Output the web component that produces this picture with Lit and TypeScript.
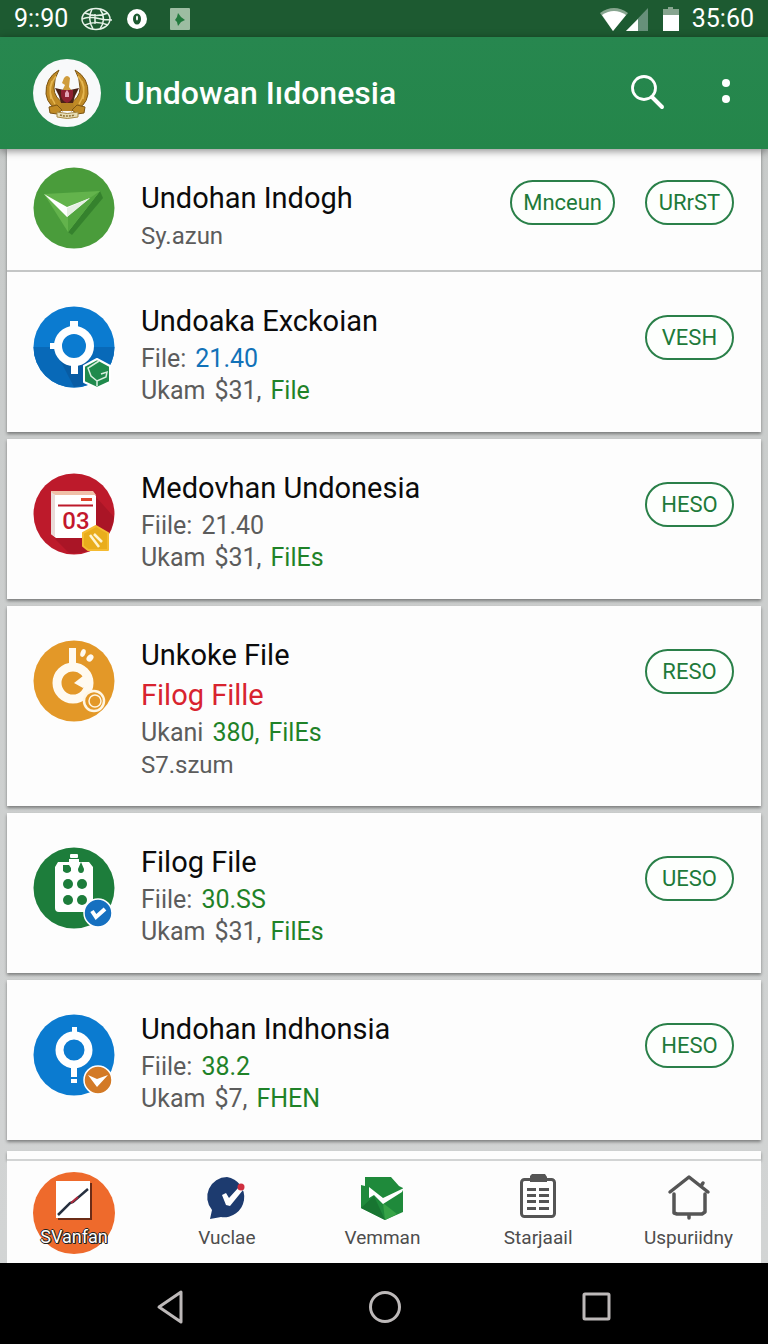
import { LitElement, html, css, svg } from 'lit';
import { customElement, property } from 'lit/decorators.js';

type Tone = 'grey' | 'blue' | 'green' | 'red';

interface Part {
  text: string;
  tone: Tone;
}

interface Row {
  icon: string;
  title: string;
  note?: string;
  lines: Part[][];
  foot?: string;
  actions: string[];
}

const grey = (text: string): Part => ({ text, tone: 'grey' });
const green = (text: string): Part => ({ text, tone: 'green' });

const ROWS: Row[] = [
  { icon: 'plane', title: 'Undohan Indogh', lines: [], foot: 'Sy.azun', actions: ['Mnceun', 'URrST'] },
  {
    icon: 'target',
    title: 'Undoaka Exckoian',
    lines: [
      [grey('File:'), { text: '21.40', tone: 'blue' }],
      [grey('Ukam'), grey('$31,'), green('File')],
    ],
    actions: ['VESH'],
  },
  {
    icon: 'calendar',
    title: 'Medovhan Undonesia',
    lines: [
      [grey('Fiile:'), grey('21.40')],
      [grey('Ukam'), grey('$31,'), green('FilEs')],
    ],
    actions: ['HESO'],
  },
  {
    icon: 'coin',
    title: 'Unkoke File',
    note: 'Filog Fille',
    lines: [[grey('Ukani'), green('380,'), green('FilEs')]],
    foot: 'S7.szum',
    actions: ['RESO'],
  },
  {
    icon: 'building',
    title: 'Filog File',
    lines: [
      [grey('Fiile:'), green('30.SS')],
      [grey('Ukam'), grey('$31,'), green('FilEs')],
    ],
    actions: ['UESO'],
  },
  {
    icon: 'pin',
    title: 'Undohan Indhonsia',
    lines: [
      [grey('Fiile:'), green('38.2')],
      [grey('Ukam'), grey('$7,'), green('FHEN')],
    ],
    actions: ['HESO'],
  },
];

const ROW_ICONS: Record<string, unknown> = {
  plane: svg`
    <circle cx="41" cy="41" r="40.5" fill="#4a9c3b"/>
    <path d="M35 65 L67 24 L70 31 L39 68 Z" fill="#2f7a2a" opacity=".75"/>
    <path d="M11 27 L67 24 L35 65 Z" fill="#63b34c"/>
    <path d="M35 46 L67 24 L35 65 Z" fill="#52a53f"/>
    <path d="M11 27 L34 40 L57 31 L34 50 Z" fill="#fff"/>
    <path d="M34 41 L57 31 L34 50 Z" fill="#e6efe3"/>`,
  target: svg`
    <circle cx="41" cy="41" r="40.5" fill="#0b7bd0"/>
    <path d="M.5 41 a40.500 40.500 0 0 0 81 0 Z" fill="#0869b8"/>
    <path d="M55 55 L70 62 L60 77 L41 81 L26 52 Z" fill="#07508f" opacity=".5"/>
    <circle cx="41" cy="40" r="16" fill="#0b7bd0" stroke="#fff" stroke-width="8"/>
    <path d="M37 15 h8 v8 h-8z M38 58 h7 v10 h-7z M17 37 h6 v6 h-6z" fill="#fff"/>
    <path d="M64 53 L77 60 V76 L64 82 L51 76 V60 Z" fill="#1f8a4c" stroke="#fff" stroke-width="2" stroke-linejoin="round"/>
    <path d="M66 55 L55 62 L58 70 L64 75 L73 71 L74 66 L68 68 M64 75 v5" fill="none" stroke="#d8efdf" stroke-width="1.500"/>`,
  calendar: svg`
    <circle cx="41" cy="41" r="40.5" fill="#bd1a2b"/>
    <path d="M63 24 L81 44 A40 40 0 0 1 36 80 L22 66 Z" fill="#9d1223" opacity=".6"/>
    <path d="M18 19 H60 L63 23 V65 H23 L18 61 Z" fill="#fff"/>
    <path d="M18 18 H60 L63 22 H22 L18 20 Z" fill="#f0c0a8"/>
    <path d="M18 19 L22 22 V64 L18 61 Z" fill="#eadbd8"/>
    <path d="M48 26.500 H59" stroke="#e0452c" stroke-width="3"/>
    <path d="M25 32.500 H60" stroke="#bd1a2b" stroke-width="2"/>
    <text x="43" y="56" text-anchor="middle" font-family="Roboto, sans-serif" font-weight="500" font-size="24" fill="#c3172c">03</text>
    <path d="M63 53 L75 60 V77 H55 L50 73 V60 Z" fill="#e9ad1c" stroke="#f5bb31" stroke-width="2" stroke-linejoin="round"/>
    <path d="M57 62 l9 12 M61 61 l8 8" stroke="#fff4cf" stroke-width="2.500"/>`,
  coin: svg`
    <circle cx="41" cy="41" r="40.5" fill="#e39828"/>
    <path d="M36 8 h7 v16 h-7z" fill="#fffaf0"/>
    <circle cx="40" cy="43" r="16" fill="none" stroke="#fffaf0" stroke-width="9"/>
    <path d="M50 36 L41 43 L50 48 L57 43 Z" fill="#fffaf0"/>
    <ellipse cx="50" cy="13" rx="2.500" ry="4" fill="#fffaf0" transform="rotate(20 50 13)"/>
    <ellipse cx="57" cy="18" rx="3" ry="4" fill="#fffaf0" transform="rotate(40 57 18)"/>
    <circle cx="61" cy="61" r="10" fill="#e39828" stroke="#fff6e3" stroke-width="2.500"/>
    <circle cx="62" cy="61" r="6" fill="none" stroke="#fff6e3" stroke-width="1.500"/>`,
  building: svg`
    <circle cx="41" cy="41" r="40.5" fill="#1d7d3b"/>
    <path d="M25 15 H36 V12 H46 V15 H56 L60 20 V62 Q60 65 57 65 H26 Q22 65 22 61 V20 Z" fill="#fff"/>
    <rect x="37" y="7" width="8" height="4" rx="1" fill="#fff"/>
    <path d="M30 18 h6 l2 3 v3 q-4 4-8 0z M48 15 l3 7 q0 4-3 4 t-3-4z" fill="#1d7d3b"/>
    <circle cx="35" cy="37" r="5" fill="#1d7d3b"/>
    <circle cx="49" cy="37" r="5" fill="#1d7d3b"/>
    <circle cx="35" cy="53" r="5" fill="#1d7d3b"/>
    <circle cx="49" cy="53" r="5" fill="#1d7d3b"/>
    <circle cx="65" cy="66" r="14" fill="#1670c0" stroke="#fff" stroke-width="1.500"/>
    <path d="M59 64 l4 6 l9 -8" fill="none" stroke="#fff" stroke-width="4"/>`,
  pin: svg`
    <circle cx="41" cy="41" r="40.5" fill="#0b7bd0"/>
    <circle cx="41" cy="36" r="14.500" fill="none" stroke="#fff" stroke-width="8"/>
    <path d="M39 13 h5 v7 h-5z M38 53 h6 v10 h-6z M38 65 h6 v4 h-6z" fill="#fff"/>
    <circle cx="65" cy="66" r="14" fill="#d37a26" stroke="#fff" stroke-width="1.500"/>
    <path d="M55 61 L64 65 L75 61 L64 73 Z" fill="#fff"/>`,
};

const TAB_ICONS: Record<string, unknown> = {
  chat: svg`
    <path d="M24 3 A20 20 0 1 1 18 43 L7 45 L9 36 A20 20 0 0 1 24 3 Z" fill="#1d3b6f"/>
    <path d="M19 21 l4 -2 l3 5 l10 -11 l4 3 l-13 16 l-4 -1 z" fill="#fff"/>
    <circle cx="38" cy="13" r="3.500" fill="#cf2f3f"/>`,
  box: svg`
    <path d="M7 3 H33 L41 12 L45 14 V38 L27 46 L3 34 V11 L7 12 Z" fill="#1f8a3b"/>
    <path d="M25 29 L39 40 L27 46 Z" fill="#37a347"/>
    <path d="M3 34 L16 22 L27 46 Z" fill="#187531"/>
    <path d="M11 13 L25 24 L46 14 L44 18 L25 30 L16 21 L11 24 Z" fill="#fff"/>`,
  clipboard: svg`
    <rect x="7.500" y="5.500" width="33" height="37" rx="3" fill="#fff" stroke="#555" stroke-width="3"/>
    <path d="M16 2 L18 0 H31 L33 3 V8 H16 Z" fill="#555"/>
    <path d="M13 15.500 h9 M13 21.500 h9 M13 27.500 h9 M13 34.500 h9 M25 15.500 h10 M25 21.500 h10 M25 27.500 h10 M25 34.500 h10" stroke="#555" stroke-width="3"/>`,
  home: svg`
    <path d="M5 18 L24 3 L43 18 M9 20 V39 L12 40 H37 L40 38 V20 M24 40 V44 M36 12 L38 9" fill="none" stroke="#555" stroke-width="3.500" stroke-linecap="round" stroke-linejoin="round"/>`,
};

const TABS = [
  { icon: 'chat', label: 'Vuclae' },
  { icon: 'box', label: 'Vemman' },
  { icon: 'clipboard', label: 'Starjaail' },
  { icon: 'home', label: 'Uspuriidny' },
];

@customElement('list-row')
export class ListRow extends LitElement {
  static styles = css`
    :host {
      display: flex;
      align-items: flex-start;
      padding: 31px 27px 25px 26px;
      background: #fdfdfd;
    }

    :host([first]) {
      padding-bottom: 18px;
      border-bottom: 2px solid #c4c6c6;
    }

    .icon {
      flex: none;
      width: 82px;
      height: 82px;
      margin: 3px 26px 0 0;
    }

    :host([first]) .icon {
      margin: -13px 26px 0 0;
    }

    .body {
      flex: 1;
      min-width: 0;
    }

    h2 {
      margin: 0 0 4px;
      font-size: 29px;
      line-height: 36px;
      font-weight: 400;
      color: #0b0b0b;
    }

    p {
      margin: 0;
      font-size: 25px;
      line-height: 32px;
    }

    .note {
      margin-bottom: 4px;
      font-size: 29px;
      line-height: 36px;
    }

    .line {
      display: flex;
      gap: 9px;
    }

    .foot {
      font-size: 24px;
    }

    .grey { color: #5c5c5c; }
    .blue { color: #1272b8; }
    .green { color: #1f8228; }
    .red { color: #d8232f; }

    .actions {
      display: flex;
      gap: 30px;
      margin-top: 12px;
    }

    :host([first]) .actions {
      margin-top: 0;
    }

    button {
      min-width: 89px;
      height: 45px;
      padding: 0 11px;
      border: 2px solid #2a8049;
      border-radius: 23px;
      background: #fdfffd;
      color: #1d7a3a;
      font-family: inherit;
      font-size: 22px;
    }
  `;

  @property({ attribute: false }) row!: Row;

  render() {
    const { icon, title, note, lines, foot, actions } = this.row;
    return html`
      <svg class="icon" viewBox="0 0 82 82" aria-hidden="true">${ROW_ICONS[icon]}</svg>
      <div class="body">
        <h2>${title}</h2>
        ${note ? html`<p class="note red">${note}</p>` : ''}
        ${lines.map(
          (parts) => html`<p class="line">${parts.map((p) => html`<span class=${p.tone}>${p.text}</span>`)}</p>`
        )}
        ${foot ? html`<p class="foot grey">${foot}</p>` : ''}
      </div>
      <div class="actions">${actions.map((a) => html`<button type="button">${a}</button>`)}</div>
    `;
  }
}

@customElement('app-root')
export class AppRoot extends LitElement {
  static styles = css`
    :host {
      display: flex;
      flex-direction: column;
      min-height: 100vh;
      background: linear-gradient(#c6c9c8, #d3d5d5);
      font-family: Roboto, 'Liberation Sans', sans-serif;
    }

    .status {
      display: flex;
      align-items: center;
      justify-content: space-between;
      height: 37px;
      padding: 0 14px;
      background: #1d5a31;
      color: #fff;
      font-size: 25px;
    }

    .status div {
      display: flex;
      align-items: center;
    }

    .status svg {
      display: block;
    }

    .left svg {
      margin-left: 13px;
    }

    .right svg {
      margin-right: 12px;
    }

    .bar {
      display: flex;
      align-items: center;
      height: 112px;
      padding: 0 22px 0 32px;
      background: linear-gradient(#27874f, #24864a);
      box-shadow: 0 2px 8px rgba(0, 0, 0, 0.45);
      z-index: 1;
      color: #fff;
    }

    .bar h1 {
      flex: 1;
      margin: 0 0 0 22px;
      font-size: 32px;
      font-weight: 500;
    }

    .bar button {
      display: flex;
      padding: 0;
      border: 0;
      background: none;
      margin-left: 38px;
    }

    main {
      flex: 1;
      display: flex;
      flex-direction: column;
      gap: 7px;
      padding: 0 7px;
    }

    .card {
      background: #fdfdfd;
      box-shadow: 0 2px 3px rgba(0, 0, 0, 0.4);
    }

    .peek {
      flex: 1;
      min-height: 8px;
      margin-top: 4px;
    }

    .tabs {
      display: grid;
      grid-template-columns: 142px repeat(3, 1fr) 145px;
      height: 102px;
      margin: 0 7px;
      border-top: 2px solid #d2d4d4;
      background: #fdfdfd;
    }

    .tab {
      display: flex;
      flex-direction: column;
      align-items: center;
      gap: 4px;
      padding-top: 13px;
      color: #4d4d4d;
      font-size: 19px;
      line-height: 24px;
      text-decoration: none;
    }

    .current {
      display: flex;
      flex-direction: column;
      align-items: center;
      justify-content: flex-end;
      align-self: start;
      width: 82px;
      height: 82px;
      margin: 11px 0 0 26px;
      border-radius: 50%;
      background: #ee6a2c;
      color: #fff;
      font-size: 18px;
      line-height: 24px;
      text-decoration: none;
      text-shadow: 1px 0 #222, -1px 0 #222, 0 1px #222, 0 -1px #222, 1px 1px #222;
    }

    .current svg {
      margin-bottom: 5px;
    }

    .current span {
      margin-bottom: 5px;
    }

    .system {
      display: flex;
      align-items: center;
      justify-content: center;
      gap: 180px;
      height: 81px;
      padding-top: 6px;
      box-sizing: border-box;
      background: #000;
    }

    .system button {
      display: flex;
      padding: 0;
      border: 0;
      background: none;
    }
  `;

  renderStatus() {
    return html`
      <div class="status">
        <div class="left">
          <span>9::90</span>
          <svg width="32" height="24" viewBox="0 0 32 24" fill="none" stroke="#e6f2e8" stroke-width="1.500">
            <ellipse cx="15" cy="12" rx="14" ry="10.500"/>
            <path d="M1 12 Q8 9 15 11 T31 13 M4 6 Q15 11 27 6 M4 18 Q15 13 27 18 M11 2 Q6 12 12 22 M19 2 Q26 12 19 22 M14 7 V17"/>
          </svg>
          <svg width="22" height="22" viewBox="0 0 22 22">
            <circle cx="11" cy="11" r="10" fill="#fff"/>
            <ellipse cx="11" cy="11" rx="4" ry="5.500" fill="#1d5a31"/>
            <ellipse cx="11" cy="10" rx="1" ry="2.500" fill="#fff"/>
          </svg>
          <svg width="30" height="22" viewBox="0 0 30 22">
            <rect x="9" width="20" height="22" rx="1" fill="#9dbda2"/>
            <path d="M17 5 L20 9 L24 12 L20 14 L17 18 L16 14 L14 12 L16 9 Z" fill="#227a3d"/>
          </svg>
        </div>
        <div class="right">
          <svg width="52" height="26" viewBox="0 0 52 26">
            <path d="M2 7 Q16 -3 30 7 L15 25 Z" fill="#87a58f"/>
            <path d="M4 9 Q16 1 28 9 L15 25 Z" fill="#fff"/>
            <path d="M28 25 L50 2 V25 Z" fill="#67907a"/>
            <path d="M28 25 L40 13 V25 Z" fill="#fff"/>
          </svg>
          <svg width="18" height="24" viewBox="0 0 18 24">
            <path d="M1 2 H6 V0 H11 V2 H17 V8 H1 Z" fill="#87a58f"/>
            <rect x="1" y="8" width="16" height="16" fill="#fff"/>
          </svg>
          <span>35:60</span>
        </div>
      </div>
    `;
  }

  renderEmblem() {
    return html`
      <svg width="70" height="70" viewBox="0 0 70 70" role="img" aria-label="Garuda">
        <circle cx="35" cy="35" r="34" fill="#f8f9fa"/>
        <path d="M27 12 Q13 20 14 36 Q16 50 31 53 L33 46 Q22 40 22 30 Q22 20 27 12 Z" fill="#c08a25" stroke="#7c5514" stroke-width="1"/>
        <path d="M43 12 Q57 20 56 36 Q54 50 39 53 L37 46 Q48 40 48 30 Q48 20 43 12 Z" fill="#c08a25" stroke="#7c5514" stroke-width="1"/>
        <path d="M24 18 Q16 28 19 41 M20 23 Q15 34 23 46 M46 18 Q54 28 51 41 M50 23 Q55 34 47 46" fill="none" stroke="#e5b650" stroke-width="1.500"/>
        <path d="M32 20 Q35 16 38 20 L37 29 L40 33 H30 L33 27 L30 25 Z" fill="#cf9c3c"/>
        <path d="M23 30 L32 32 H38 L47 30 L43 38 L41 45 H29 L27 38 Z" fill="#4c2116"/>
        <path d="M29 32 H41 V38 Q40 43 35 45 Q30 43 29 38 Z" fill="#8e2031"/>
        <path d="M33 35 l2-3 l2 3 v4 h-4z" fill="#e3a5b8"/>
        <path d="M29 45 H41 L43 53 H27 Z" fill="#b58124"/>
        <path d="M17 49 L25 47 L30 52 L25 56 L18 55 Z M53 49 L45 47 L40 52 L45 56 L52 55 Z" fill="#c08a25" stroke="#7c5514" stroke-width="1"/>
        <path d="M25 54 Q35 57 46 54 V59 Q35 62 25 59 Z" fill="#e8dfb8" stroke="#a88a45" stroke-width="1"/>
        <path d="M28 57 Q35 59 43 57" fill="none" stroke="#8f7233" stroke-width="1.500" stroke-dasharray="2 1"/>
      </svg>
    `;
  }

  render() {
    const [first, second, ...rest] = ROWS;
    return html`
      ${this.renderStatus()}
      <header class="bar">
        ${this.renderEmblem()}
        <h1>Undowan Iıdonesia</h1>
        <button type="button" aria-label="Search">
          <svg width="40" height="40" viewBox="0 0 40 40" fill="none" stroke="#fff" stroke-linecap="round">
            <circle cx="16" cy="15" r="11.500" stroke-width="2.800"/>
            <path d="M24 24 L34 34" stroke-width="4"/>
          </svg>
        </button>
        <button type="button" aria-label="More">
          <svg width="40" height="40" viewBox="0 0 40 40" fill="#fff">
            <circle cx="20" cy="10" r="4"/>
            <circle cx="20" cy="26" r="4"/>
          </svg>
        </button>
      </header>
      <main>
        <section class="card">
          <list-row first .row=${first}></list-row>
          <list-row .row=${second}></list-row>
        </section>
        ${rest.map((row) => html`<section class="card"><list-row .row=${row}></list-row></section>`)}
        <div class="card peek"></div>
      </main>
      <nav class="tabs">
        <a class="current" href="#">
          <svg width="36" height="39" viewBox="0 0 36 39">
            <rect x="2" y="2" width="34" height="37" fill="#6b2c17"/>
            <rect width="34" height="37" fill="#fff"/>
            <path d="M2 34 L14 22 L17 21 L32 8" fill="none" stroke="#27303f" stroke-width="2.500"/>
            <path d="M15 22 L22 16" stroke="#b02a3c" stroke-width="2"/>
          </svg>
          <span>SVanfan</span>
        </a>
        ${TABS.map(
          (t) => html`
            <a class="tab" href="#">
              <svg width="48" height="48" viewBox="0 0 48 48" aria-hidden="true">${TAB_ICONS[t.icon]}</svg>
              <span>${t.label}</span>
            </a>
          `
        )}
      </nav>
      <footer class="system">
        <button type="button" aria-label="Back">
          <svg width="32" height="36" viewBox="0 0 32 36" fill="none" stroke="#bdb9b9" stroke-width="3" stroke-linejoin="round">
            <path d="M3 18 L25 3 V33 Z"/>
          </svg>
        </button>
        <button type="button" aria-label="Home">
          <svg width="34" height="34" viewBox="0 0 34 34" fill="none" stroke="#bdb9b9" stroke-width="3">
            <circle cx="17" cy="17" r="14.500"/>
          </svg>
        </button>
        <button type="button" aria-label="Recent apps">
          <svg width="30" height="32" viewBox="2 0 30 32" fill="none" stroke="#bdb9b9" stroke-width="3">
            <rect x="4" y="3" width="25" height="25" rx="1"/>
          </svg>
        </button>
      </footer>
    `;
  }
}
